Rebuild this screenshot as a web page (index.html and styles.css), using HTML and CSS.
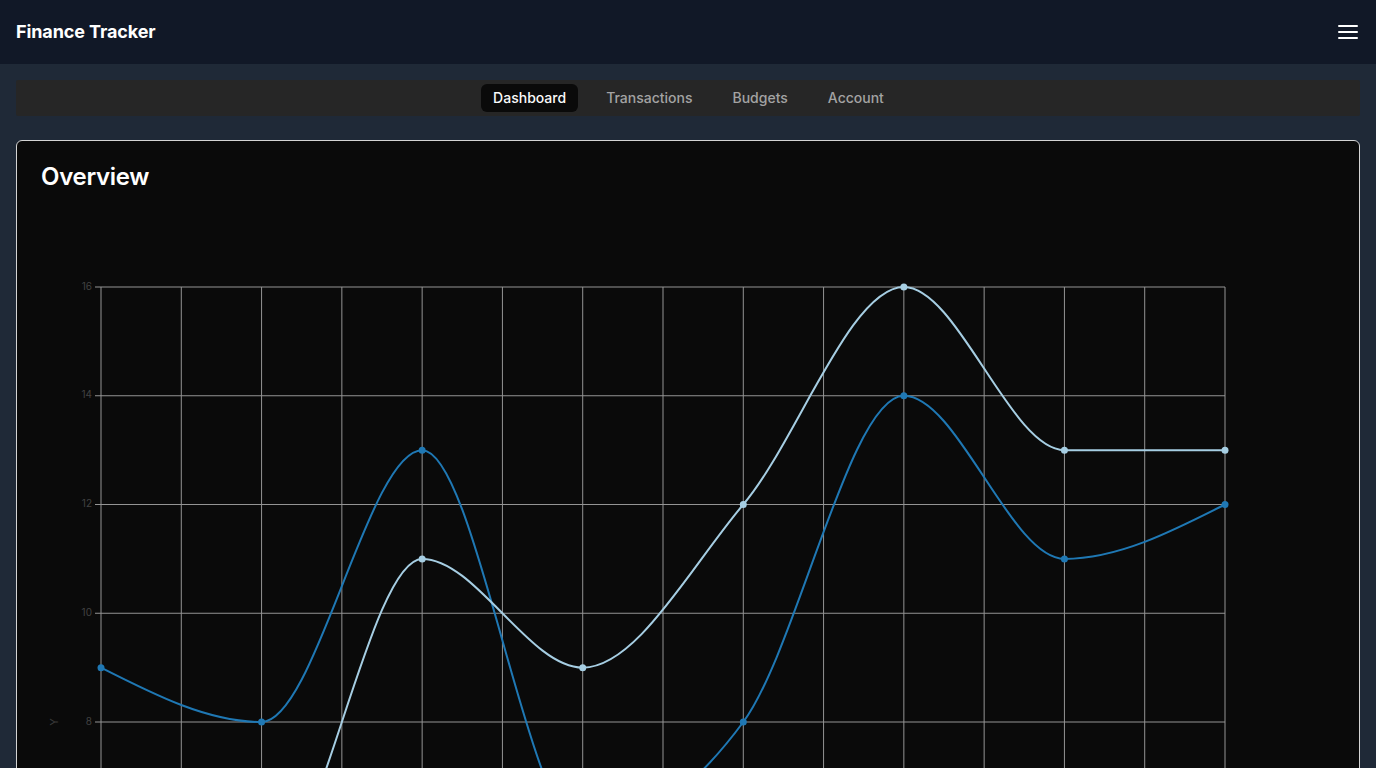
FILE: index.html
```html
<!DOCTYPE html>
<html lang="en">
<head>
<meta charset="utf-8">
<title>Finance Tracker</title>
<link rel="stylesheet" href="styles.css">
</head>
<body>
<header class="topbar">
  <h1 class="brand">Finance Tracker</h1>
  <button class="menu-btn" aria-label="Menu">
    <svg width="24" height="24" viewBox="0 0 24 24" fill="none" stroke="currentColor" stroke-width="2" stroke-linecap="round"><line x1="3" y1="6" x2="21" y2="6"/><line x1="3" y1="12" x2="21" y2="12"/><line x1="3" y1="18" x2="21" y2="18"/></svg>
  </button>
</header>
<main class="main">
  <nav class="tabs">
    <div class="tab-list">
      <span class="tab active">Dashboard</span>
      <span class="tab">Transactions</span>
      <span class="tab">Budgets</span>
      <span class="tab">Account</span>
    </div>
  </nav>
  <section class="card">
    <h2 class="card-title">Overview</h2>
    <div class="chart-wrap">
      <svg id="chart" class="chart" width="1294" height="1010" viewBox="0 0 1294 1010"></svg>
    </div>
  </section>
</main>
<script src="script.js"></script>
</body>
</html>
```
FILE: styles.css
```css
* { box-sizing: border-box; }
html, body { margin: 0; padding: 0; }
body {
  background: #1f2937;
  color: #fafafa;
  font-family: Inter, "Liberation Sans", sans-serif;
}
.topbar {
  height: 64px;
  background: #111827;
  display: flex;
  align-items: center;
  justify-content: space-between;
  padding: 0 16px 1px;
}
.brand {
  margin: 0;
  font-size: 18px;
  line-height: 28px;
  font-weight: 700;
  color: #ffffff;
  letter-spacing: -0.1px;
}
.menu-btn {
  background: none;
  border: 0;
  padding: 0;
  margin-top: 1px;
  color: #ffffff;
  display: flex;
  width: 24px;
  height: 24px;
}
.main {
  padding: 16px;
}
.tabs {
  background: #262626;
  height: 36px;
  border-radius: 2px;
  display: flex;
  justify-content: center;
  align-items: center;
}
.tab-list {
  display: flex;
  gap: 16px;
  padding: 4px;
  margin-left: 1px;
}
.tab {
  height: 28px;
  padding: 0 12px 2px;
  display: flex;
  align-items: center;
  font-size: 14px;
  font-weight: 500;
  color: #a3a3a3;
  border-radius: 6px;
}
.tab.active {
  background: #0a0a0a;
  color: #fafafa;
}
.card {
  margin-top: 24px;
  background: #0a0a0a;
  border: 1px solid #d4d4d4;
  border-radius: 6px;
  padding: 24px;
}
.card-title {
  margin: 0;
  font-size: 24px;
  line-height: 24px;
  font-weight: 600;
  color: #ffffff;
  letter-spacing: -0.3px;
}
.chart-wrap {
  display: block;
}
.chart {
  display: block;
}
.grid line { stroke: #949494; stroke-width: 1; }
.tick-label { fill: #424242; font-size: 10px; font-family: Inter, "Liberation Sans", sans-serif; }
.axis-label { fill: #3a3a3a; font-size: 11px; font-family: Inter, "Liberation Sans", sans-serif; }
.series { fill: none; stroke-width: 2; }
.series-a { stroke: #1f78b4; }
.series-b { stroke: #a6cee3; }
.dot-a { fill: #1f78b4; }
.dot-b { fill: #a6cee3; }
```
FILE: script.js
```js
(function () {
  var svg = document.getElementById('chart');
  var NS = 'http://www.w3.org/2000/svg';
  var ox = 60, oy = 98, pw = 1124, ph = 870, ymax = 16;
  var seriesA = [9, 8, 13, 6, 8, 14, 11, 12];
  var seriesB = [7, 5, 11, 9, 12, 16, 13, 13];

  function el(name, attrs, parent) {
    var e = document.createElementNS(NS, name);
    for (var k in attrs) e.setAttribute(k, attrs[k]);
    (parent || svg).appendChild(e);
    return e;
  }
  function sx(i) { return ox + i * pw / 7; }
  function sy(v) { return oy + (ymax - v) * ph / ymax; }

  var grid = el('g', { 'class': 'grid' });
  for (var i = 0; i <= 14; i++) {
    var x = ox + i * pw / 14;
    el('line', { x1: x, y1: oy, x2: x, y2: oy + ph }, grid);
  }
  for (var v = 0; v <= 16; v += 2) {
    var y = sy(v);
    el('line', { x1: ox - 6, y1: y, x2: ox + pw, y2: y }, grid);
    var t = el('text', { x: ox - 9, y: y, 'class': 'tick-label', 'text-anchor': 'end', 'dominant-baseline': 'middle' });
    t.textContent = String(v);
  }
  var yl = el('text', { x: 0, y: 0, 'class': 'axis-label', 'text-anchor': 'middle', 'dominant-baseline': 'middle', transform: 'translate(14,' + (oy + ph / 2) + ') rotate(-90)' });
  yl.textContent = 'Y';

  function sign(x) { return x < 0 ? -1 : 1; }
  function monotonePath(pts) {
    var n = pts.length, s = [], t = [];
    for (var i = 0; i < n - 1; i++) s.push((pts[i + 1][1] - pts[i][1]) / (pts[i + 1][0] - pts[i][0]));
    for (var j = 1; j < n - 1; j++) {
      var h0 = pts[j][0] - pts[j - 1][0], h1 = pts[j + 1][0] - pts[j][0];
      var s0 = s[j - 1], s1 = s[j];
      var p = (s0 * h1 + s1 * h0) / (h0 + h1);
      t[j] = (sign(s0) + sign(s1)) * Math.min(Math.abs(s0), Math.abs(s1), 0.5 * Math.abs(p)) || 0;
    }
    t[0] = (3 * s[0] - t[1]) / 2;
    t[n - 1] = (3 * s[n - 2] - t[n - 2]) / 2;
    var d = 'M' + pts[0][0] + ',' + pts[0][1];
    for (var k = 0; k < n - 1; k++) {
      var dx = (pts[k + 1][0] - pts[k][0]) / 3;
      d += 'C' + (pts[k][0] + dx) + ',' + (pts[k][1] + dx * t[k]) + ',' +
        (pts[k + 1][0] - dx) + ',' + (pts[k + 1][1] - dx * t[k + 1]) + ',' +
        pts[k + 1][0] + ',' + pts[k + 1][1];
    }
    return d;
  }
  function drawSeries(data, cls, dotCls) {
    var pts = data.map(function (v, i) { return [sx(i), sy(v)]; });
    el('path', { d: monotonePath(pts), 'class': 'series ' + cls });
    pts.forEach(function (p) { el('circle', { cx: p[0], cy: p[1], r: 3.5, 'class': dotCls }); });
  }
  drawSeries(seriesA, 'series-a', 'dot-a');
  drawSeries(seriesB, 'series-b', 'dot-b');
})();
```
